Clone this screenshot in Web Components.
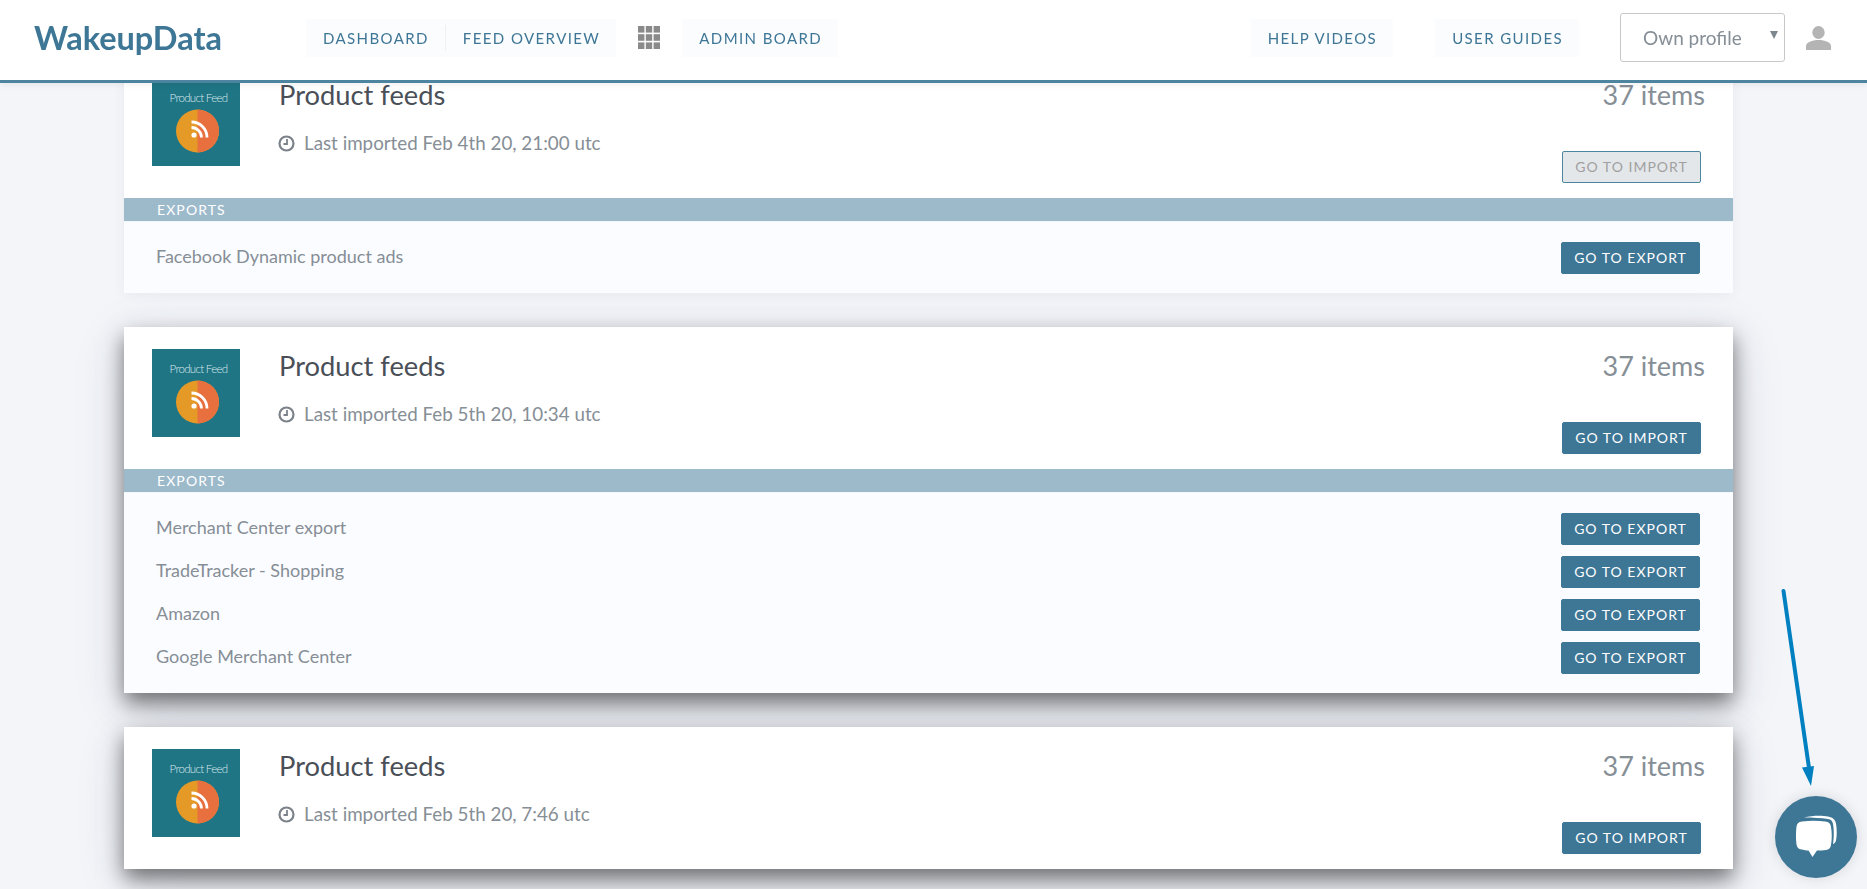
<!DOCTYPE html>
<html lang="en">
<head>
<meta charset="utf-8">
<title>WakeupData</title>
<style>
    html, body { margin: 0; height: 100%; overflow: hidden; }
    body { background: #f3f5f9; font-family: "Lato", "Liberation Sans", sans-serif; }
</style>
</head>
<body>
<wd-header></wd-header>
<wd-feed-list>
    <wd-feed-card date="Last imported Feb 4th 20, 21:00 utc" import-disabled>
        <wd-export-row>Facebook Dynamic product ads</wd-export-row>
    </wd-feed-card>
    <wd-feed-card date="Last imported Feb 5th 20, 10:34 utc" raised>
        <wd-export-row>Merchant Center export</wd-export-row>
        <wd-export-row>TradeTracker - Shopping</wd-export-row>
        <wd-export-row>Amazon</wd-export-row>
        <wd-export-row>Google Merchant Center</wd-export-row>
    </wd-feed-card>
    <wd-feed-card date="Last imported Feb 5th 20, 7:46 utc" raised></wd-feed-card>
</wd-feed-list>
<wd-chat-launcher></wd-chat-launcher>

<script>
class WdNavItem extends HTMLElement {
    constructor() {
        super();
        const shadow = this.attachShadow({mode: 'open'});
        shadow.innerHTML = `
        <style>
            :host {
                display: flex;
                align-items: center;
                height: 38px;
                padding: 0 16px 0 17px;
                background: #fafcfe;
                color: #3e7696;
                font-size: 15px;
                letter-spacing: 1.400px;
                white-space: nowrap;
            }
        </style>
        <slot></slot>`;
    }
}
customElements.define('wd-nav-item', WdNavItem);

class WdHeader extends HTMLElement {
    constructor() {
        super();
        const shadow = this.attachShadow({mode: 'open'});
        shadow.innerHTML = `
        <style>
            :host {
                display: flex;
                align-items: center;
                position: fixed;
                top: 0;
                left: 0;
                right: 0;
                z-index: 5;
                box-sizing: border-box;
                height: 83px;
                padding-bottom: 5px;
                background: #fff;
                border-bottom: 3px solid #4d84a0;
                box-shadow: 0 2px 6px rgba(0,0,0,.06);
            }
            .logo {
                margin-left: 34px;
                width: 272px;
                color: #3e7696;
                font-size: 32.500px;
                font-weight: 700;
            }
            .group { display: flex; }
            .sep-wrap { display: flex; align-items: center; background: #fafcfe; height: 38px; }
            .sep-wrap i { display: block; width: 1px; height: 26px; background: #eef1f4; }
            .grid { margin: 0 22px 0 22px; display: block; }
            .right { margin-left: auto; display: flex; align-items: center; }
            .gap { width: 42px; }
            .select {
                box-sizing: border-box;
                margin-left: 41px;
                width: 165px;
                height: 49px;
                border: 1px solid #c9c9c9;
                border-radius: 3px;
                padding-left: 22px;
                display: flex;
                align-items: center;
                position: relative;
                color: #868e96;
                font-size: 19px;
            }
            .select::after {
                content: "";
                position: absolute;
                right: 6px;
                top: 17px;
                border-left: 4px solid transparent;
                border-right: 4px solid transparent;
                border-top: 8px solid #7d8790;
            }
            .user { margin: 0 36px 0 21px; display: block; }
        </style>
        <div class="logo">WakeupData</div>
        <div class="group">
            <wd-nav-item>DASHBOARD</wd-nav-item>
            <div class="sep-wrap"><i></i></div>
            <wd-nav-item>FEED OVERVIEW</wd-nav-item>
        </div>
        <svg class="grid" width="22" height="23" viewBox="0 0 22 23" fill="#8a8a8a">
            <rect x="0" y="0" width="6.400" height="6.600"/><rect x="7.800" y="0" width="6.400" height="6.600"/><rect x="15.600" y="0" width="6.400" height="6.600"/>
            <rect x="0" y="8.200" width="6.400" height="6.600"/><rect x="7.800" y="8.200" width="6.400" height="6.600"/><rect x="15.600" y="8.200" width="6.400" height="6.600"/>
            <rect x="0" y="16.400" width="6.400" height="6.600"/><rect x="7.800" y="16.400" width="6.400" height="6.600"/><rect x="15.600" y="16.400" width="6.400" height="6.600"/>
        </svg>
        <wd-nav-item>ADMIN BOARD</wd-nav-item>
        <div class="right">
            <wd-nav-item>HELP VIDEOS</wd-nav-item>
            <div class="gap"></div>
            <wd-nav-item>USER GUIDES</wd-nav-item>
            <div class="select">Own profile</div>
            <svg class="user" width="25" height="24" viewBox="0 0 25 24" fill="#b4b4b4">
                <ellipse cx="12.500" cy="6.500" rx="6.200" ry="6.500"/>
                <path d="M0 24v-4c0-3.600 6-6 12.500-6s12.500 2.400 12.500 6v4z"/>
            </svg>
        </div>`;
    }
}
customElements.define('wd-header', WdHeader);

class WdButton extends HTMLElement {
    constructor() {
        super();
        const shadow = this.attachShadow({mode: 'open'});
        shadow.innerHTML = `
        <style>
            :host {
                display: flex;
                align-items: center;
                justify-content: center;
                box-sizing: border-box;
                width: 139px;
                height: 32px;
                padding-bottom: 1px;
                border-radius: 2px;
                border: 1px solid #3e7696;
                background: #3e7696;
                color: #fff;
                font-size: 14px;
                letter-spacing: 1px;
                white-space: nowrap;
            }
            :host([disabled]) {
                background: #e4e7ea;
                border-color: #4d84a0;
                color: #a0a0a0;
            }
        </style>
        <slot></slot>`;
    }
}
customElements.define('wd-button', WdButton);

class WdFeedThumb extends HTMLElement {
    constructor() {
        super();
        const shadow = this.attachShadow({mode: 'open'});
        shadow.innerHTML = `
        <style>
            :host { display: block; width: 88px; height: 88px; }
            svg { display: block; }
            text { font-family: "Lato", sans-serif; font-weight: 300; }
        </style>
        <svg width="88" height="88" viewBox="0 0 88 88">
            <rect width="88" height="88" fill="#207585"/>
            <text x="46.500" y="24" text-anchor="middle" font-size="11.500" letter-spacing="-.7" fill="#d8e8ec">Product Feed</text>
            <circle cx="45.500" cy="53" r="21.500" fill="#e59a27"/>
            <path d="M45.500 31.500a21.500 21.500 0 0 1 0 43z" fill="#e8703f"/>
            <circle cx="42" cy="57" r="2.600" fill="#fff"/>
            <path d="M39.500 49.500a10 10 0 0 1 10 10M39.500 44a15.500 15.500 0 0 1 15.500 15.500" fill="none" stroke="#fff" stroke-width="2.800"/>
        </svg>`;
    }
}
customElements.define('wd-feed-thumb', WdFeedThumb);

class WdExportRow extends HTMLElement {
    constructor() {
        super();
        const shadow = this.attachShadow({mode: 'open'});
        shadow.innerHTML = `
        <style>
            :host {
                display: flex;
                align-items: center;
                justify-content: space-between;
                height: 32px;
                color: #868e96;
                font-size: 18px;
            }
            span { padding-bottom: 4px; }
        </style>
        <span><slot></slot></span>
        <wd-button>GO TO EXPORT</wd-button>`;
    }
}
customElements.define('wd-export-row', WdExportRow);

class WdFeedCard extends HTMLElement {
    constructor() {
        super();
        const shadow = this.attachShadow({mode: 'open'});
        shadow.innerHTML = `
        <style>
            :host {
                display: block;
                background: #fff;
                box-shadow: 0 2px 12px rgba(60,70,90,.06);
            }
            :host([raised]) { box-shadow: 0 10px 20px rgba(0,0,0,.5), 0 12px 50px rgba(40,50,80,.14); }
            .head {
                box-sizing: border-box;
                height: 142px;
                padding: 22px 32px 15px 28px;
                display: flex;
            }
            .info { margin-left: 39px; flex: 1; }
            .title {
                color: #4a4f57;
                font-size: 27.300px;
                line-height: 34px;
            }
            .date {
                display: flex;
                align-items: center;
                margin-top: 19px;
                color: #868e96;
                font-size: 18.800px;
                line-height: 24px;
            }
            .date svg { margin: 0 9px 0 -1px; display: block; }
            .side {
                display: flex;
                flex-direction: column;
                justify-content: space-between;
                align-items: flex-end;
            }
            .count {
                margin-right: -4px;
                color: #868e96;
                font-size: 27px;
                line-height: 34px;
            }
            .bar {
                box-sizing: border-box;
                height: 24px;
                padding-left: 33px;
                background: #9dbacb;
                border-bottom: 1px solid #f4f7fa;
                color: #fff;
                font-size: 14px;
                line-height: 23px;
                letter-spacing: 1.100px;
            }
            .rows {
                background: #fbfcff;
                padding: 20px 33px 19px 32px;
                display: flex;
                flex-direction: column;
                gap: 11px;
            }
            .exports[hidden] { display: none; }
        </style>
        <div class="head">
            <wd-feed-thumb></wd-feed-thumb>
            <div class="info">
                <div class="title">Product feeds</div>
                <div class="date">
                    <svg width="17" height="17" viewBox="0 0 17 17" fill="none" stroke="#7b828a">
                        <circle cx="8.500" cy="8.500" r="7" stroke-width="2.200"/>
                        <path d="M9 4v5H5.500" stroke-width="1.800"/>
                    </svg>
                    <span id="date"></span>
                </div>
            </div>
            <div class="side">
                <div class="count">37 items</div>
                <wd-button id="import">GO TO IMPORT</wd-button>
            </div>
        </div>
        <div class="exports" hidden>
            <div class="bar">EXPORTS</div>
            <div class="rows"><slot></slot></div>
        </div>`;
    }

    connectedCallback() {
        this.shadowRoot.querySelector('#date').textContent = this.getAttribute('date');
        if (this.hasAttribute('import-disabled')) {
            this.shadowRoot.querySelector('#import').setAttribute('disabled', '');
        }
        // la barra EXPORTS serve solo se ci sono righe
        this.shadowRoot.querySelector('.exports').hidden = this.children.length === 0;
    }
}
customElements.define('wd-feed-card', WdFeedCard);

class WdFeedList extends HTMLElement {
    constructor() {
        super();
        const shadow = this.attachShadow({mode: 'open'});
        shadow.innerHTML = `
        <style>
            :host {
                display: flex;
                flex-direction: column;
                gap: 34px;
                width: 1609px;
                margin-left: 124px;
                padding-top: 56px;
            }
        </style>
        <slot></slot>`;
    }
}
customElements.define('wd-feed-list', WdFeedList);

class WdChatLauncher extends HTMLElement {
    constructor() {
        super();
        const shadow = this.attachShadow({mode: 'open'});
        shadow.innerHTML = `
        <style>
            :host { position: fixed; inset: 0; z-index: 6; pointer-events: none; display: block; }
            svg { display: block; }
        </style>
        <svg width="1867" height="889" viewBox="0 0 1867 889">
            <defs>
                <filter id="soft" x="-30%" y="-30%" width="160%" height="160%"><feGaussianBlur stdDeviation="7"/></filter>
            </defs>
            <path d="M1783.500 591L1809 768" stroke="#0080c0" stroke-width="4" stroke-linecap="round" fill="none"/>
            <path d="M1802 767.500L1814 766L1811 786z" fill="#0080c0"/>
            <circle cx="1816" cy="837" r="41" fill="#000" opacity=".12" filter="url(#soft)"/>
            <circle cx="1816" cy="837" r="41" fill="#3e7696"/>
            <path d="M1804 817.500c8-2 18-2 24-1 5 1 7 3 8 7 1 6 1 12 0 17-.5 2-1.500 3-3 3.500 1-7 1-15 0-20-.5-3-2-4.500-5-5-7-1-15-1.500-24-1.500z" fill="#fff"/>
            <path d="M1802 821.500c8-1 16-1 23 0 4 .5 5.500 2 6 5.500 1 6 1 12 0 18-.5 3-2 4.500-5 5-3 .5-6 .5-9 .5l-4.500 6.500-4-6.500c-2 0-5-.5-7-1-3-.5-4.500-2-5-5-.7-5-.7-13 0-18 .5-3 2-4.500 5.500-5z" fill="#fff"/>
        </svg>`;
    }
}
customElements.define('wd-chat-launcher', WdChatLauncher);
</script>
</body>
</html>
